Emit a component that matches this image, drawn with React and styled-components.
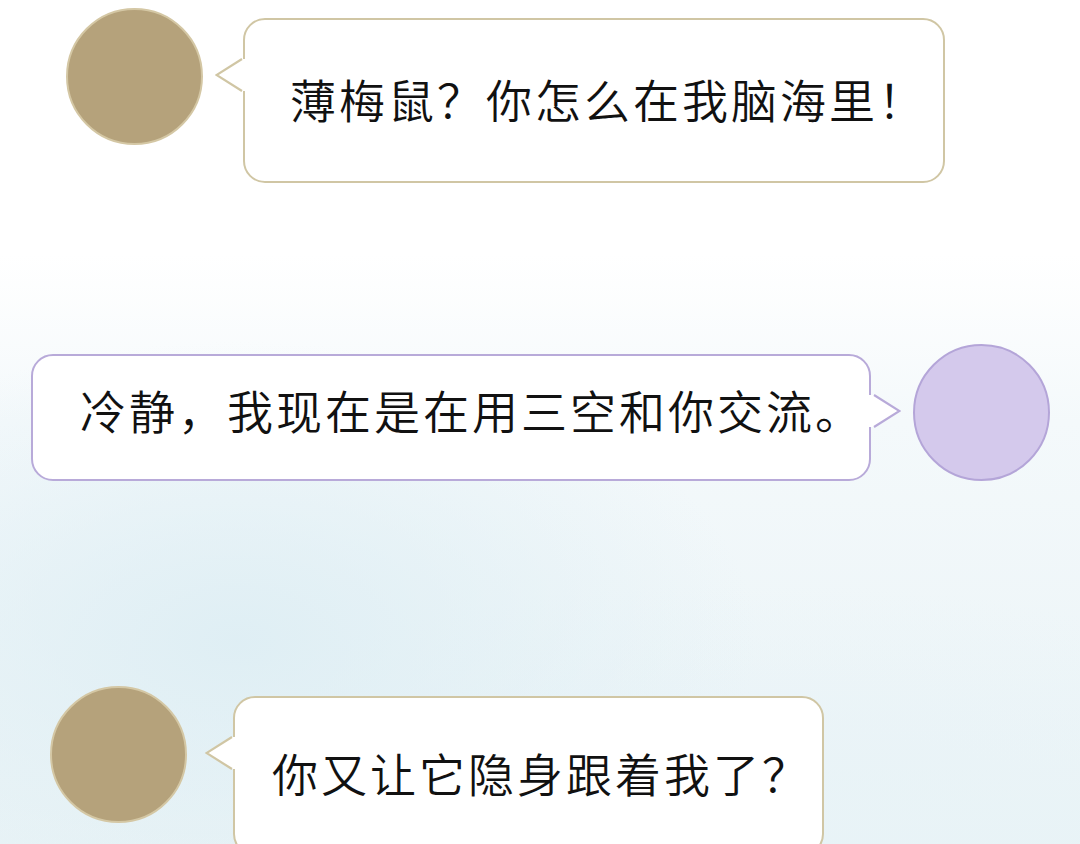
import React from 'react';
import styled, { createGlobalStyle } from 'styled-components';

const GlobalStyle = createGlobalStyle`
    html, body {
        margin: 0;
        padding: 0;
    }
    body {
        width: 1080px;
        height: 844px;
        overflow: hidden;
        font-family: "Noto Sans CJK SC", "Noto Sans", sans-serif;
    }
`;

const themes = {
    tan: { fill: '#b5a27b', ring: '#d4c7a4', line: '#d0c6a4' },
    lilac: { fill: '#d4c9ec', ring: '#b4a5d8', line: '#b8aad9' },
};

const messages = [
    { side: 'left', tone: 'tan', text: '薄梅鼠？你怎么在我脑海里！', offset: 8, indent: 66, width: 702, height: 165, pad: 45, lift: 3 },
    { side: 'right', tone: 'lilac', text: '冷静，我现在是在用三空和你交流。', offset: 161, indent: 31, width: 840, height: 127, pad: 47, lift: 9 },
    { side: 'left', tone: 'tan', text: '你又让它隐身跟着我了？', offset: 205, indent: 50, width: 591, height: 160, pad: 37, lift: 4, gap: 46 },
];

const Tail = ({ tone, side }) => {
    const t = themes[tone];
    return (
        <TailMark side={side} width="34" height="36" viewBox="0 0 34 36">
            <path d="M32 2 L27 2 L1 18 L27 34 L32 34 Z" fill="#fff"/>
            <path d="M27 2 L1.5 18 L27 34" fill="none" stroke={t.line} strokeWidth="2.2" strokeLinejoin="miter"/>
        </TailMark>
    );
};

const Message = ({ m }) => (
    <Row offset={m.offset} indent={m.indent} reverse={m.side === 'right'}>
        <Avatar tone={m.tone}/>
        <Spacer gap={m.gap || (m.side === 'right' ? 42 : 40)}/>
        <Bubble tone={m.tone} w={m.width} h={m.height} pad={m.pad} lift={m.lift}>
            <Tail tone={m.tone} side={m.side}/>
            <Line>{m.text}</Line>
        </Bubble>
    </Row>
);

export default function App() {
    return (
        <>
            <GlobalStyle/>
            <Page>
                {messages.map((m, i) => <Message key={i} m={m}/>)}
            </Page>
        </>
    );
}

const Page = styled.div`
    width: 1080px;
    height: 844px;
    overflow: hidden;
    display: flex;
    flex-direction: column;
    background:
        radial-gradient(ellipse 520px 300px at 22% 76%, rgba(222, 238, 244, 0.95) 0%, rgba(226, 240, 245, 0) 100%),
        radial-gradient(ellipse 700px 260px at 70% 100%, rgba(232, 243, 247, 0.9) 0%, rgba(235, 245, 248, 0) 100%),
        linear-gradient(180deg, #ffffff 0%, #ffffff 30%, #f4f9fb 50%, #e9f3f6 100%);
`;

const Row = styled.div`
    display: flex;
    flex-direction: ${p => p.reverse ? 'row-reverse' : 'row'};
    justify-content: flex-end;
    align-items: flex-start;
    align-self: flex-start;
    margin-top: ${p => p.offset}px;
    padding-left: ${p => p.indent}px;
`;

const Avatar = styled.div`
    flex: none;
    width: 137px;
    height: 137px;
    box-sizing: border-box;
    border-radius: 50%;
    background: ${p => themes[p.tone].fill};
    border: 2px solid ${p => themes[p.tone].ring};
`;

const Spacer = styled.div`
    flex: none;
    width: ${p => p.gap}px;
`;

const Bubble = styled.div`
    position: relative;
    flex: none;
    box-sizing: border-box;
    width: ${p => p.w}px;
    height: ${p => p.h}px;
    margin-top: 10px;
    padding-left: ${p => p.pad}px;
    padding-bottom: ${p => p.lift * 2}px;
    display: flex;
    align-items: center;
    background: #ffffff;
    border: 2px solid ${p => themes[p.tone].line};
    border-radius: 22px;
`;

const TailMark = styled.svg`
    position: absolute;
    top: 37px;
    ${p => p.side === 'right'
        ? `right: -32px; transform: scaleX(-1);`
        : `left: -30px;`}
`;

const Line = styled.div`
    font-size: 46px;
    font-weight: 350;
    letter-spacing: 3px;
    line-height: 1;
    color: #111111;
    white-space: nowrap;
`;
